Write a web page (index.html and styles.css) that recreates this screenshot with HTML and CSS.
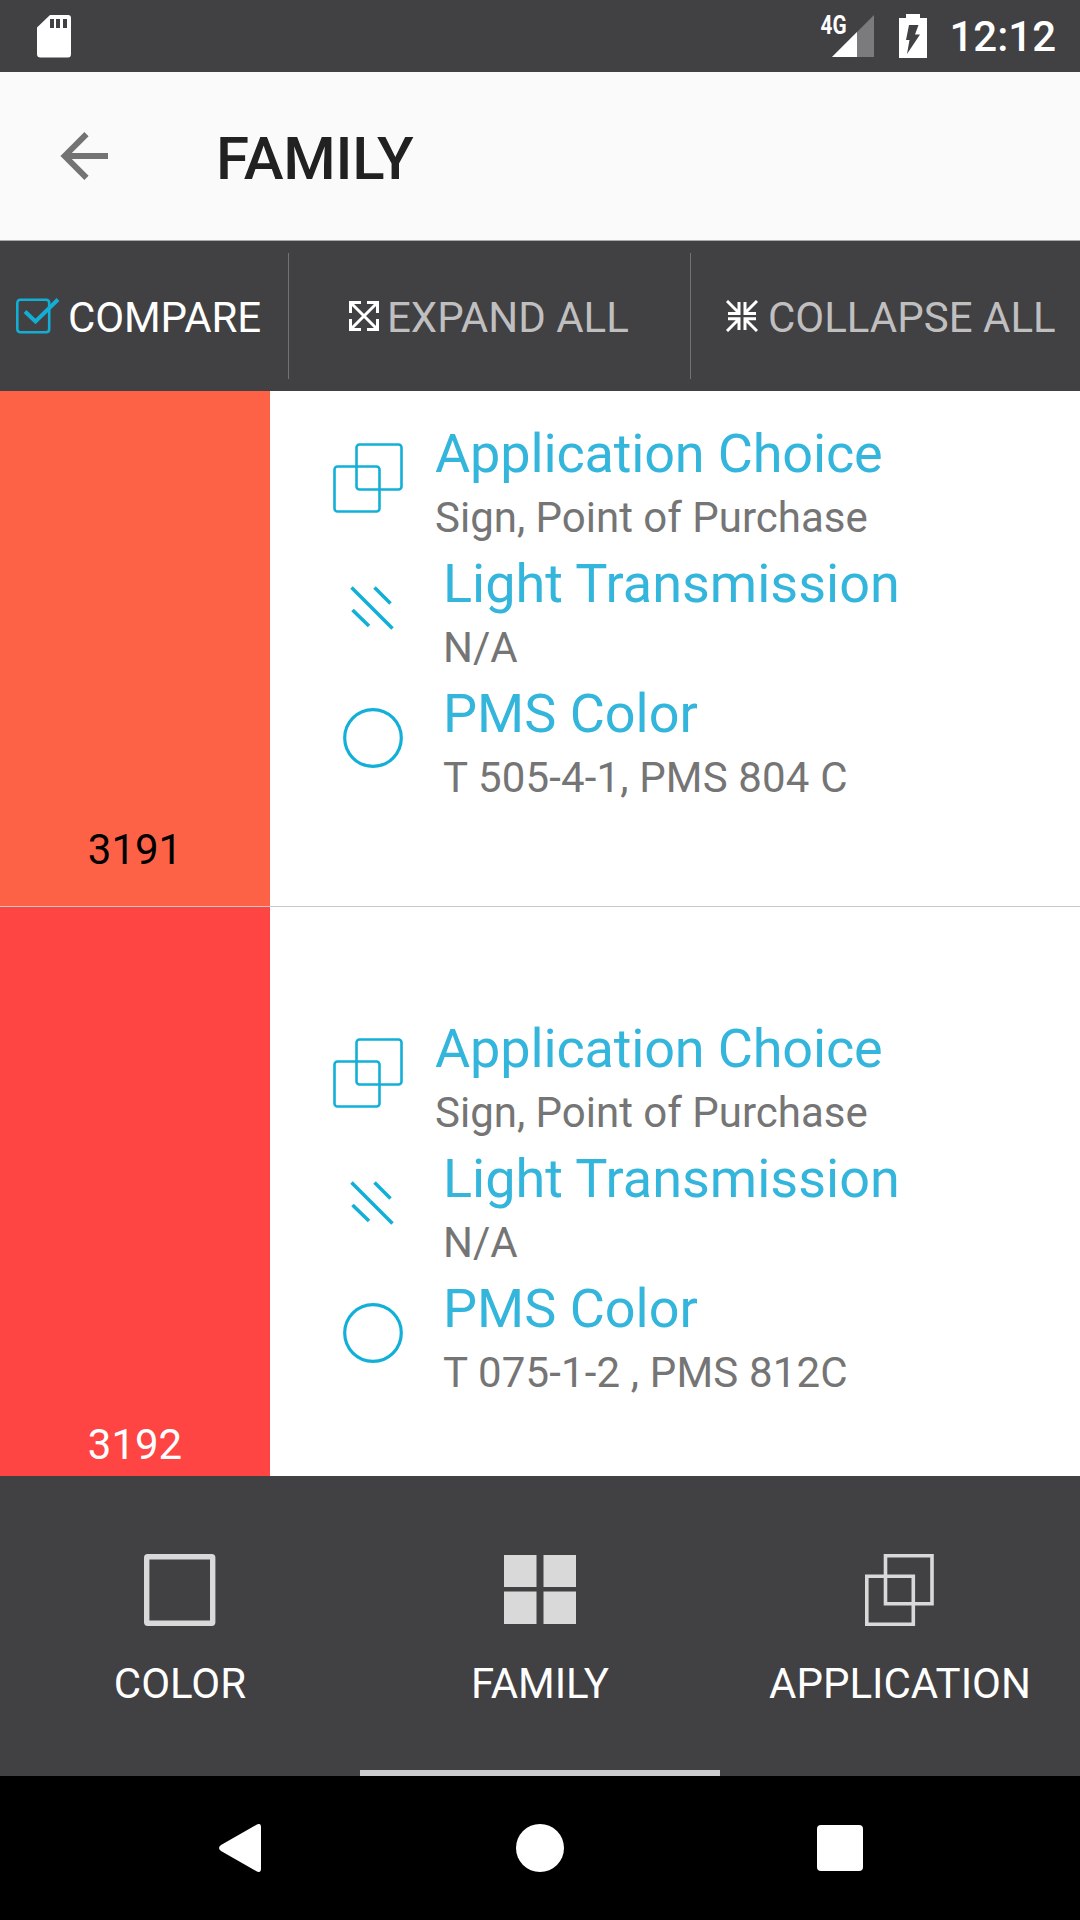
FILE: index.html
```html
<!DOCTYPE html>
<html lang="en">
<head>
    <meta charset="UTF-8">
    <title>Family</title>
    <link rel="stylesheet" href="styles.css">
</head>
<body>
    <svg class="symbols">
        <symbol id="icon-application" viewBox="0 0 70 70">
            <rect x="23.5" y="1.5" width="45" height="45" rx="3"/>
            <rect x="1.5" y="23.5" width="45" height="45" rx="3"/>
        </symbol>
        <symbol id="icon-light" viewBox="0 0 44 44">
            <path d="M1.5 1.5l41 41M24.5 1.5l16 16M2.5 24l16.5 16"/>
        </symbol>
        <symbol id="icon-pms" viewBox="0 0 60 60">
            <circle cx="30" cy="30" r="28.3"/>
        </symbol>
    </svg>

    <div class="status-bar">
        <svg class="sd-card" width="34" height="43" viewBox="0 0 34 43">
            <path fill="#fff" d="M13 0h18q3 0 3 3v36q0 3.500-3 3.500H3.500q-3.500 0-3.500-3.500V12.500z"/>
            <path fill="#414042" d="M13 4h4v9h-4zM19 4h4v9h-4zM26 4h4v9h-4z"/>
        </svg>
        <svg class="signal" width="56" height="50" viewBox="0 -3 56 50">
            <path fill="#7b7a7c" d="M12 43h42V1z"/>
            <path fill="#fff" d="M12 43h25V18z"/>
            <text x="0.500" y="19.500" textLength="26" lengthAdjust="spacingAndGlyphs">4G</text>
        </svg>
        <svg class="battery" width="28" height="44" viewBox="0 0 28 44">
            <path fill="#fff" d="M7 0h14v4h7v40H0V4h7z"/>
            <path fill="#414042" d="M10 11h9.500l-3.500 9.500h5L8 40l2.500-14H7z"/>
        </svg>
        <span class="time">12:12</span>
    </div>

    <header class="app-bar">
        <svg width="48" height="48" viewBox="0 0 48 48">
            <path d="M48 24H4M26.500 2.200L4.700 24l21.800 21.800" fill="none" stroke="#737373" stroke-width="6"/>
        </svg>
        <h1>FAMILY</h1>
    </header>

    <div class="toolbar">
        <div class="tool tool-compare">
            <svg width="44" height="36" viewBox="0 0 44 36">
                <path d="M1.300 5q0-3.200 3.200-3.200h25.500q3.200 0 3.200 3.200v26q0 3.200-3.200 3.200h-25.500q-3.200 0-3.200-3.200z" fill="none" stroke="#12aed6" stroke-width="2.600"/>
                <path d="M9 13.500l10.500 10L42 1.500" fill="none" stroke="#12aed6" stroke-width="4"/>
            </svg>
            <span>COMPARE</span>
        </div>
        <div class="tool tool-expand">
            <svg width="30" height="30" viewBox="0 0 30 30">
                <path d="M2 2l26 26M28 2L2 28M1.500 12V1.500H12M18 1.500h10.500V12M28.500 18v10.500H18M12 28.500H1.500V18" fill="none" stroke="#fff" stroke-width="3"/>
            </svg>
            <span>EXPAND ALL</span>
        </div>
        <div class="tool tool-collapse">
            <svg width="32" height="32" viewBox="0 0 32 32">
                <path d="M1 1l12 12M31 1L19 13M1 31l12-12M31 31L19 19M13 2v11.500H2M19 2v11.500h11M2 18.700h11V30M30 18.700H19V30" fill="none" stroke="#fff" stroke-width="3"/>
            </svg>
            <span>COLLAPSE ALL</span>
        </div>
    </div>

    <div class="list">
        <div class="row row-first">
            <div class="swatch swatch-3191">3191</div>
            <div class="details">
                <div class="item item-application">
                    <svg><use href="#icon-application"/></svg>
                    <div>
                        <h2>Application Choice</h2>
                        <p>Sign, Point of Purchase</p>
                    </div>
                </div>
                <div class="item item-light">
                    <svg><use href="#icon-light"/></svg>
                    <div>
                        <h2>Light Transmission</h2>
                        <p>N/A</p>
                    </div>
                </div>
                <div class="item item-pms">
                    <svg><use href="#icon-pms"/></svg>
                    <div>
                        <h2>PMS Color</h2>
                        <p>T 505-4-1, PMS 804 C</p>
                    </div>
                </div>
            </div>
        </div>
        <div class="row">
            <div class="swatch swatch-3192">3192</div>
            <div class="details">
                <div class="item item-application">
                    <svg><use href="#icon-application"/></svg>
                    <div>
                        <h2>Application Choice</h2>
                        <p>Sign, Point of Purchase</p>
                    </div>
                </div>
                <div class="item item-light">
                    <svg><use href="#icon-light"/></svg>
                    <div>
                        <h2>Light Transmission</h2>
                        <p>N/A</p>
                    </div>
                </div>
                <div class="item item-pms">
                    <svg><use href="#icon-pms"/></svg>
                    <div>
                        <h2>PMS Color</h2>
                        <p>T 075-1-2 , PMS 812C</p>
                    </div>
                </div>
            </div>
        </div>
    </div>

    <div class="tabs">
        <div class="tab">
            <svg width="72" height="72" viewBox="0 0 72 72">
                <rect x="2.700" y="2.700" width="66" height="66.600" rx="1" fill="none" stroke="#d9d9d9" stroke-width="5.400"/>
            </svg>
            <span>COLOR</span>
        </div>
        <div class="tab active">
            <svg width="72" height="72" viewBox="0 0 72 72">
                <path fill="#d9d9d9" d="M0 1h32.500v32H0zM39.500 1H72v32H39.500zM0 37.500h32.500V70H0zM39.500 37.500H72V70H39.500z"/>
            </svg>
            <span>FAMILY</span>
        </div>
        <div class="tab">
            <svg width="72" height="72" viewBox="0 0 72 72">
                <path d="M21.500 1.800h46.500v48H21.500zM2.800 22.200h46.500v48H2.800z" fill="none" stroke="#d9d9d9" stroke-width="3.600"/>
            </svg>
            <span>APPLICATION</span>
        </div>
    </div>

    <div class="nav-bar">
        <svg width="42" height="48" viewBox="0 0 42 48">
            <path fill="#fff" d="M37.500 0.700Q42-1.500 42 3v42q0 4.500-4.500 2.300L2 27q-4-3 0-6z"/>
        </svg>
        <svg class="home" width="48" height="48" viewBox="0 0 48 48">
            <circle cx="24" cy="24" r="24" fill="#fff"/>
        </svg>
        <svg width="46" height="46" viewBox="0 0 46 46">
            <rect width="46" height="46" rx="4" fill="#fff"/>
        </svg>
    </div>
</body>
</html>
```
FILE: styles.css
```css
* {
    box-sizing: border-box;
}
body {
    width: 1080px;
    height: 1920px;
    margin: 0;
    overflow: hidden;
    display: flex;
    flex-direction: column;
    background: #fff;
    font-family: Roboto, sans-serif;
    font-size: 42px;
}
h1, h2, p {
    margin: 0;
}
svg {
    display: block;
    flex: none;
}
.symbols {
    display: none;
}

/* status bar */
.status-bar {
    height: 72px;
    display: flex;
    align-items: center;
    padding: 0 24px 0 37px;
    background: #414042;
    color: #fff;
}
.sd-card {
    margin-right: auto;
}
.signal {
    margin-right: 23px;
    overflow: visible;
}
.signal text {
    font-size: 26px;
    font-weight: 700;
    fill: #fff;
}
.battery {
    margin-right: 22px;
}
.time {
    font-weight: 500;
    line-height: 72px;
    padding-top: 2px;
}

/* app bar */
.app-bar {
    height: 169px;
    display: flex;
    align-items: center;
    gap: 108px;
    padding-left: 60px;
    background: #fafafa;
    border-bottom: 1px solid #a9aaaa;
}
.app-bar h1 {
    font-size: 60px;
    font-weight: 500;
    letter-spacing: -0.2px;
    color: #212121;
    padding-top: 4px;
}

/* toolbar */
.toolbar {
    height: 150px;
    display: flex;
    padding: 12px 0;
    background: #414042;
    color: #c0bfc0;
}
.tool {
    display: flex;
    align-items: center;
}
.tool + .tool {
    border-left: 1px solid #727173;
}
.tool-compare {
    width: 288px;
    padding-left: 16px;
    gap: 8px;
    color: #fff;
}
.tool-compare span {
    letter-spacing: -0.1px;
}
.tool-expand {
    width: 402px;
    padding-left: 60px;
    gap: 8px;
}
.tool-collapse {
    padding-left: 35px;
    gap: 10px;
}
.tool span {
    padding-top: 3px;
}

/* color list */
.list {
    height: 1085px;
    overflow: hidden;
}
.row {
    height: 569px;
    display: flex;
}
.row-first {
    height: 516px;
    border-bottom: 1px solid #c8c8c8;
}
.swatch {
    width: 270px;
    display: flex;
    align-items: flex-end;
    justify-content: center;
    line-height: 50px;
}
.swatch-3191 {
    padding-bottom: 31px;
    background: #fe6246;
    color: #000;
}
.swatch-3192 {
    padding-bottom: 6px;
    background: #fe4544;
    color: #fff;
}
.details {
    padding: 106px 0 0 63px;
}
.row-first .details {
    padding-top: 27px;
}
.item {
    height: 130px;
    display: flex;
}
.item svg {
    fill: none;
    stroke: #12b0d8;
}
.item h2 {
    font-size: 54px;
    font-weight: 400;
    line-height: 72px;
    color: #34b5dc;
}
.item p {
    line-height: 56px;
    color: #757575;
}
.item-application svg {
    width: 70px;
    height: 70px;
    margin: 25px 32px 0 0;
    stroke-width: 2.6;
}
.item-application h2 {
    letter-spacing: -0.15px;
}
.item-light svg {
    width: 44px;
    height: 44px;
    margin: 38px 49px 0 17px;
    stroke-width: 3.6;
}
.item-pms svg {
    width: 60px;
    height: 60px;
    margin: 30px 40px 0 10px;
    stroke-width: 3.2;
}
.item-pms p {
    letter-spacing: 0.15px;
}

/* tabs */
.tabs {
    height: 300px;
    display: flex;
    background: #414042;
    color: #fff;
}
.tab {
    flex: 1;
    display: flex;
    flex-direction: column;
    align-items: center;
    gap: 33px;
    padding-top: 78px;
    border-bottom: 6px solid transparent;
}
.tab.active {
    border-bottom-color: #cccbcd;
}
.tab span {
    line-height: 50px;
}

/* navigation bar */
.nav-bar {
    height: 144px;
    display: flex;
    align-items: center;
    justify-content: space-between;
    padding: 0 217px 0 219px;
    background: #000;
}
.home {
    margin-left: 2px;
}
```
